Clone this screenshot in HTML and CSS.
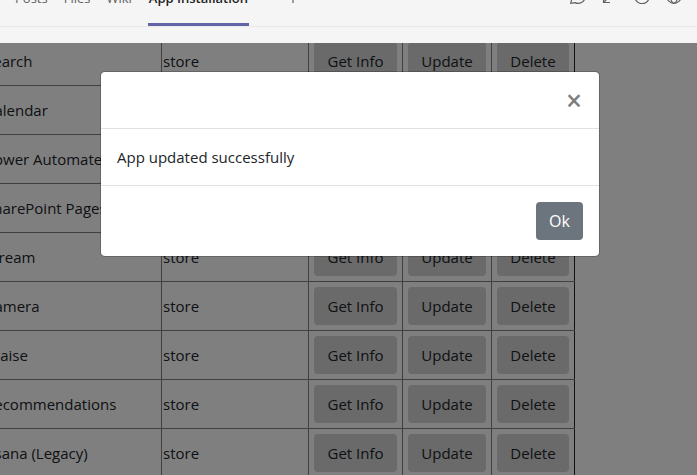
FILE: index.html
```html
<!DOCTYPE html>
<html lang="en">
<head>
<meta charset="utf-8">
<title>App Installation</title>
<link rel="stylesheet" href="styles.css">
</head>
<body>
<header class="channel-bar">
  <nav class="tabs">
    <a class="tab" href="#">Posts</a>
    <a class="tab" href="#">Files</a>
    <a class="tab" href="#">Wiki</a>
    <a class="tab tab-active" href="#" aria-current="page">App Installation</a>
    <button class="icon-button add-tab" type="button" aria-label="Add a tab">
      <svg width="16" height="16" viewBox="0 0 16 16"><path d="M8 1v14M1 8h14"/></svg>
    </button>
  </nav>
  <div class="tools">
    <button class="icon-button" type="button" aria-label="Conversation">
      <svg width="16" height="16" viewBox="0 0 16 16"><path d="M.7 15.300l1-4A7.200 7.200 0 1 1 5 14.600z"/></svg>
    </button>
    <button class="icon-button" type="button" aria-label="Expand">
      <svg width="16" height="16" viewBox="0 0 16 16"><path d="M8 1.500h6.500V8M1.500 8v6.500H8M2 14L14 2"/></svg>
    </button>
    <button class="icon-button" type="button" aria-label="Reload">
      <svg width="16" height="16" viewBox="0 0 16 16"><path d="M14.500 5A7.300 7.300 0 1 0 15.300 8M15 1v4h-4"/></svg>
    </button>
    <button class="icon-button" type="button" aria-label="Open website">
      <svg width="16" height="16" viewBox="0 0 16 16"><circle cx="8" cy="8" r="7.300"/><ellipse cx="8" cy="8" rx="3.400" ry="7.300"/><path d="M1.500 5h13M1.500 11h13"/></svg>
    </button>
  </div>
</header>

<main class="frame">
  <table class="apps">
    <colgroup><col class="col-name"><col class="col-source"><col class="col-info"><col class="col-update"><col class="col-delete"></colgroup>
    <tbody>
      <tr><td>Search</td><td>store</td><td><button type="button" class="btn">Get Info</button></td><td><button type="button" class="btn">Update</button></td><td><button type="button" class="btn">Delete</button></td></tr>
      <tr><td>Calendar</td><td>store</td><td><button type="button" class="btn">Get Info</button></td><td><button type="button" class="btn">Update</button></td><td><button type="button" class="btn">Delete</button></td></tr>
      <tr><td>Power Automate</td><td>store</td><td><button type="button" class="btn">Get Info</button></td><td><button type="button" class="btn">Update</button></td><td><button type="button" class="btn">Delete</button></td></tr>
      <tr><td>SharePoint Pages</td><td>store</td><td><button type="button" class="btn">Get Info</button></td><td><button type="button" class="btn">Update</button></td><td><button type="button" class="btn">Delete</button></td></tr>
      <tr><td>Stream</td><td>store</td><td><button type="button" class="btn">Get Info</button></td><td><button type="button" class="btn">Update</button></td><td><button type="button" class="btn">Delete</button></td></tr>
      <tr><td>Camera</td><td>store</td><td><button type="button" class="btn">Get Info</button></td><td><button type="button" class="btn">Update</button></td><td><button type="button" class="btn">Delete</button></td></tr>
      <tr><td>Praise</td><td>store</td><td><button type="button" class="btn">Get Info</button></td><td><button type="button" class="btn">Update</button></td><td><button type="button" class="btn">Delete</button></td></tr>
      <tr><td>Recommendations</td><td>store</td><td><button type="button" class="btn">Get Info</button></td><td><button type="button" class="btn">Update</button></td><td><button type="button" class="btn">Delete</button></td></tr>
      <tr><td>Asana (Legacy)</td><td>store</td><td><button type="button" class="btn">Get Info</button></td><td><button type="button" class="btn">Update</button></td><td><button type="button" class="btn">Delete</button></td></tr>
    </tbody>
  </table>
  <div class="backdrop">
    <section class="modal" role="dialog" aria-modal="true" aria-describedby="message">
      <div class="modal-header"><button type="button" class="close" aria-label="Close">×</button></div>
      <p class="modal-body" id="message">App updated successfully</p>
      <div class="modal-footer"><button type="button" class="btn btn-secondary">Ok</button></div>
    </section>
  </div>
</main>
</body>
</html>
```
FILE: styles.css
```css
* { box-sizing: border-box; }

body {
  margin: 0;
  height: 100vh;
  display: flex;
  flex-direction: column;
  overflow: hidden;
  background: #f5f5f5;
  color: #212529;
  font: 15px/24px "Open Sans", "Noto Sans", sans-serif;
}

button { font: inherit; color: inherit; cursor: pointer; }

/* Channel bar, scrolled partly out of view */
.channel-bar {
  flex: none;
  display: flex;
  justify-content: space-between;
  align-items: flex-end;
  height: 61px;
  margin: -34px 0 16px;
  padding: 0 15px 0 15px;
  border-bottom: 1px solid #e8e8e8;
}

.tabs { display: flex; align-items: flex-end; gap: 16px; }

.tab {
  padding-bottom: 15px;
  border-bottom: 3px solid transparent;
  color: #616161;
  font-size: 13px;
  line-height: 20px;
  text-decoration: none;
}

.tab-active {
  padding-left: 1px;
  padding-right: 1px;
  border-color: #6264a7;
  color: #242424;
  font-weight: 600;
}

.icon-button {
  display: block;
  padding: 0 0 22px;
  border: 0;
  background: none;
  color: #616161;
}

.icon-button svg {
  display: block;
  fill: none;
  stroke: currentColor;
  stroke-width: 1.2;
}

.add-tab { margin-left: 20px; }
.tools { display: flex; gap: 16px; }

/* Tab content */
.frame { position: relative; flex: 1; overflow: hidden; background: #fff; }

.apps {
  width: 592px;
  margin: -7px 0 0 -17px;
  table-layout: fixed;
  border-collapse: collapse;
  border-right: 1px solid #222;
}

.col-name { width: 178px; }
.col-source { width: 147px; }
.col-info { width: 94px; }
.col-update { width: 89px; }
.col-delete { width: 83px; }

.apps td {
  height: 49px;
  padding: 0 1px;
  border: 1px solid #808080;
  white-space: nowrap;
}

.apps td:last-child { border-right-color: #222; }
.apps td:nth-child(n + 3) { padding: 0 5px; }
.apps .btn { display: block; width: 100%; }

.btn {
  height: 38px;
  padding: 0 12px;
  border: 0;
  border-radius: 4px;
  background: #d4d4d4;
}

.backdrop {
  position: absolute;
  inset: 0;
  padding: 28px 8px 28px 11px;
  background: rgba(0, 0, 0, 0.5);
}

.modal {
  max-width: 500px;
  margin: 0 auto;
  border: 1px solid rgba(0, 0, 0, 0.2);
  border-radius: 5px;
  background: #fff;
  background-clip: padding-box;
}

.modal-header {
  display: flex;
  justify-content: flex-end;
  height: 57px;
  padding: 16px;
  border-bottom: 1px solid #dee2e6;
}

.close {
  padding: 0 1px;
  border: 0;
  background: none;
  color: #7f7f7f;
  font-size: 28px;
  font-weight: 600;
  line-height: 24px;
}

.modal-body { margin: 0; padding: 16px; }

.modal-footer {
  display: flex;
  justify-content: flex-end;
  padding: 16px;
  border-top: 1px solid #dee2e6;
}

.btn-secondary { min-width: 47px; background: #6c757d; color: #fff; font-size: 16px; }
```
